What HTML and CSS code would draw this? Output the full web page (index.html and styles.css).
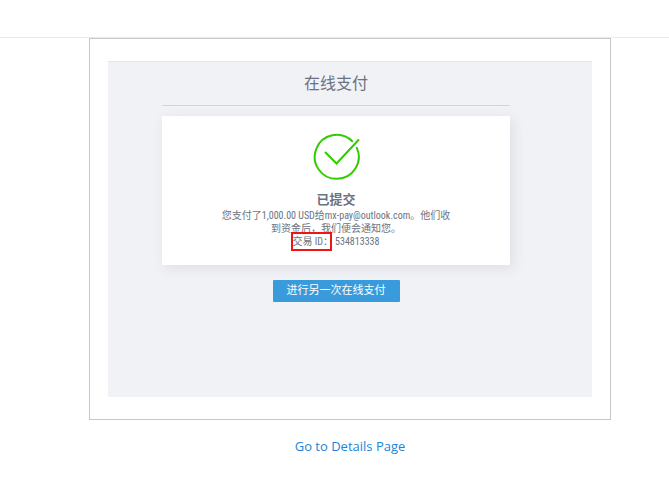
FILE: index.html
```html
<!DOCTYPE html>
<html lang="zh-CN">
<head>
<meta charset="utf-8">
<meta name="viewport" content="width=device-width, initial-scale=1">
<title>在线支付</title>
<link rel="stylesheet" href="styles.css">
</head>
<body>
<header class="topbar"></header>
<main class="page">
  <section class="frame">
    <div class="panel">
      <h1 class="title">在线支付</h1>
      <article class="card">
        <svg class="check" viewBox="0 0 48 48" aria-hidden="true">
          <path d="M40.200 8.200A22 22 0 1 0 44.800 14.800"/>
          <path d="M13.500 19.500L24.500 30.500L46.500 7"/>
        </svg>
        <h2 class="status">已提交</h2>
        <p class="message">您支付了1,000.00 USD给mx-pay@outlook.com。他们收<br>到资金后，我们便会通知您。</p>
        <p class="message transaction"><span class="marked">交易 ID：</span><span>534813338</span></p>
      </article>
      <button class="again" type="button">进行另一次在线支付</button>
    </div>
  </section>
  <a class="details" href="#details">Go to Details Page</a>
</main>
</body>
</html>
```
FILE: styles.css
```css
* {
  box-sizing: border-box;
}

body {
  margin: 0;
  background: #fff;
  color: #6b7280;
  font-family: "Roboto Condensed", "Liberation Sans Narrow", Roboto, "Noto Sans CJK SC", sans-serif;
}

h1, h2, p {
  margin: 0;
}

.topbar {
  height: 38px;
  border-bottom: 1px solid #ebebeb;
}

.page {
  display: flex;
  flex-direction: column;
  align-items: center;
  padding: 0 58px 0 89px;
}

.frame {
  width: 100%;
  padding: 22px 18px;
  border: 1px solid #c8c8c8;
}

.panel {
  display: flex;
  flex-direction: column;
  align-items: center;
  min-height: 336px;
  padding: 0 82px 0 54px;
  border-top: 1px solid #e4e5e8;
  background: #f1f2f6;
}

.title {
  width: 100%;
  height: 44px;
  border-bottom: 1px solid #d3d5da;
  font-size: 16px;
  font-weight: 400;
  line-height: 44px;
  text-align: center;
}

.card {
  display: flex;
  flex-direction: column;
  align-items: center;
  width: 100%;
  margin-top: 10px;
  padding: 17px 0;
  background: #fff;
  box-shadow: 3px 3px 12px rgba(50, 55, 80, 0.1);
}

.check {
  width: 48px;
  height: 48px;
  fill: none;
  stroke: #3c0;
  stroke-width: 2;
  stroke-linecap: round;
}

.status {
  margin-top: 10px;
  font-size: 13px;
  font-weight: 700;
  line-height: 18px;
}

.message {
  font-size: 10px;
  line-height: 13px;
  text-align: center;
  white-space: nowrap;
}

.transaction {
  display: flex;
  gap: 2px;
}

.marked {
  position: relative;
}

/* Highlight box drawn over the label */
.marked::after {
  content: "";
  position: absolute;
  inset: -3px 1px -3px -2px;
  border: 2px solid #ef1515;
}

.again {
  height: 22px;
  margin-top: 15px;
  padding: 0 14px;
  border: 0;
  border-radius: 1px;
  background: #3a9bdc;
  color: #fff;
  font-family: inherit;
  font-size: 11px;
  font-weight: 400;
  line-height: 22px;
}

.details {
  margin-top: 16px;
  color: #1a85dc;
  font-family: "Open Sans", sans-serif;
  font-size: 13px;
  line-height: 20px;
  text-decoration: none;
}
```
